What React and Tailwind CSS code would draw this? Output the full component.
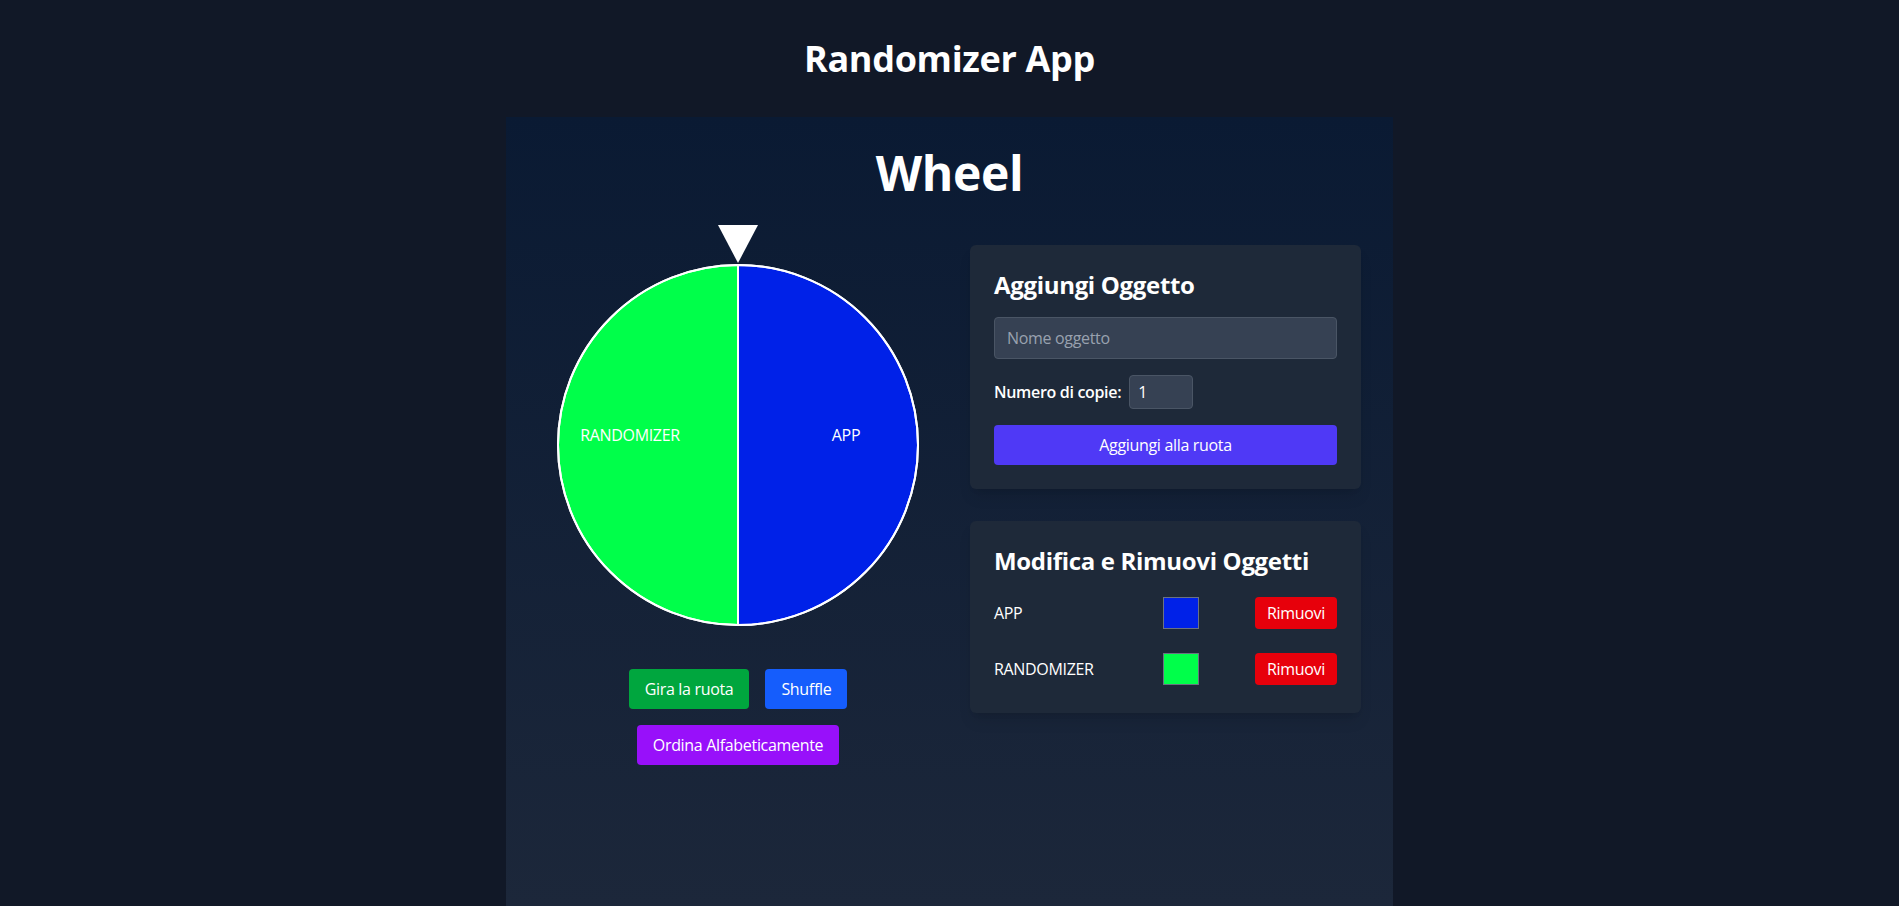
import React, { useState } from 'react';

const FONT = { fontFamily: '"Open Sans", "Noto Sans", sans-serif' };

export default function App() {
  const [items] = useState([
    { name: 'APP', color: '#0021e8' },
    { name: 'RANDOMIZER', color: '#00ff4a' },
  ]);
  const [name, setName] = useState('');
  const [copies, setCopies] = useState(1);

  const cx = 200;
  const cy = 200;
  const r = 180;
  const slice = 360 / items.length;

  const point = (deg, rad) => {
    const a = ((deg - 90) * Math.PI) / 180;
    return [cx + rad * Math.cos(a), cy + rad * Math.sin(a)];
  };

  return (
    <div className="min-h-screen bg-[#111827] text-white flex flex-col items-center tracking-[-0.02em]" style={FONT}>
      <header className="h-[117px] flex items-center justify-center">
        <h1 className="text-4xl font-bold">Randomizer App</h1>
      </header>

      <main className="w-[887px] h-[789px] bg-linear-to-b from-[#0a1a33] to-[#1c273a] p-8">
        <h2 className="text-5xl leading-none font-bold text-center mb-12">Wheel</h2>

        <div className="flex gap-8 items-start">
          {/* ruota */}
          <div className="flex-1 flex flex-col items-center">
            <div className="relative w-[400px] h-[400px]">
              <div className="absolute -top-5 left-1/2 -translate-x-1/2 w-0 h-0 border-l-[20px] border-r-[20px] border-t-[38px] border-l-transparent border-r-transparent border-t-white z-10"></div>
              <svg width="400" height="400" viewBox="0 0 400 400">
                {items.map((item, i) => {
                  const start = i * slice;
                  const end = start + slice;
                  const [x1, y1] = point(start, r);
                  const [x2, y2] = point(end, r);
                  const large = slice > 180 ? 1 : 0;
                  const [tx, ty] = point(start + slice / 2, 108);
                  return (
                    <g key={item.name}>
                      <path
                        d={`M ${cx} ${cy} L ${x1} ${y1} A ${r} ${r} 0 ${large} 1 ${x2} ${y2} Z`}
                        fill={item.color}
                        stroke="#ffffff"
                        strokeWidth="2"
                      />
                      <text x={tx} y={ty - 4} fill="#ffffff" fontSize="16" textAnchor="middle" style={FONT}>
                        {item.name}
                      </text>
                    </g>
                  );
                })}
                <circle cx={cx} cy={cy} r={r} fill="none" stroke="#ffffff" strokeWidth="2" />
              </svg>
            </div>

            <div className="mt-6 flex gap-4">
              <button className="px-4 py-2 rounded bg-green-600 text-white">Gira la ruota</button>
              <button className="px-4 py-2 rounded bg-blue-600 text-white">Shuffle</button>
            </div>
            <button className="mt-4 px-4 py-2 rounded bg-purple-600 text-white">Ordina Alfabeticamente</button>
          </div>

          {/* pannello */}
          <div className="w-[391px] flex flex-col gap-8">
            <div className="bg-gray-800 rounded-md p-6 shadow-lg">
              <h3 className="text-2xl font-bold mb-4">Aggiungi Oggetto</h3>
              <input
                type="text"
                value={name}
                onChange={e => setName(e.target.value)}
                placeholder="Nome oggetto"
                className="w-full px-3 py-2 bg-gray-700 border border-gray-600 rounded text-white placeholder-gray-400 mb-4 outline-none"
              />
              <div className="flex items-center mb-4">
                <label className="font-semibold">Numero di copie:</label>
                <input
                  type="number"
                  value={copies}
                  onChange={e => setCopies(e.target.value)}
                  className="ml-2 w-16 px-2 py-1 bg-gray-700 border border-gray-600 rounded text-white outline-none"
                />
              </div>
              <button className="w-full py-2 rounded bg-indigo-600 text-white">Aggiungi alla ruota</button>
            </div>

            <div className="bg-gray-800 rounded-md p-6 shadow-lg">
              <h3 className="text-2xl font-bold mb-4">Modifica e Rimuovi Oggetti</h3>
              <div className="flex flex-col gap-4">
                {items.map(item => (
                  <div key={item.name} className="flex items-center py-1">
                    <span className="flex-1">{item.name}</span>
                    <div className="w-9 h-8 border border-gray-500" style={{ backgroundColor: item.color }}></div>
                    <button className="ml-14 px-3 py-1 rounded bg-red-600 text-white">Rimuovi</button>
                  </div>
                ))}
              </div>
            </div>
          </div>
        </div>
      </main>
    </div>
  );
}
